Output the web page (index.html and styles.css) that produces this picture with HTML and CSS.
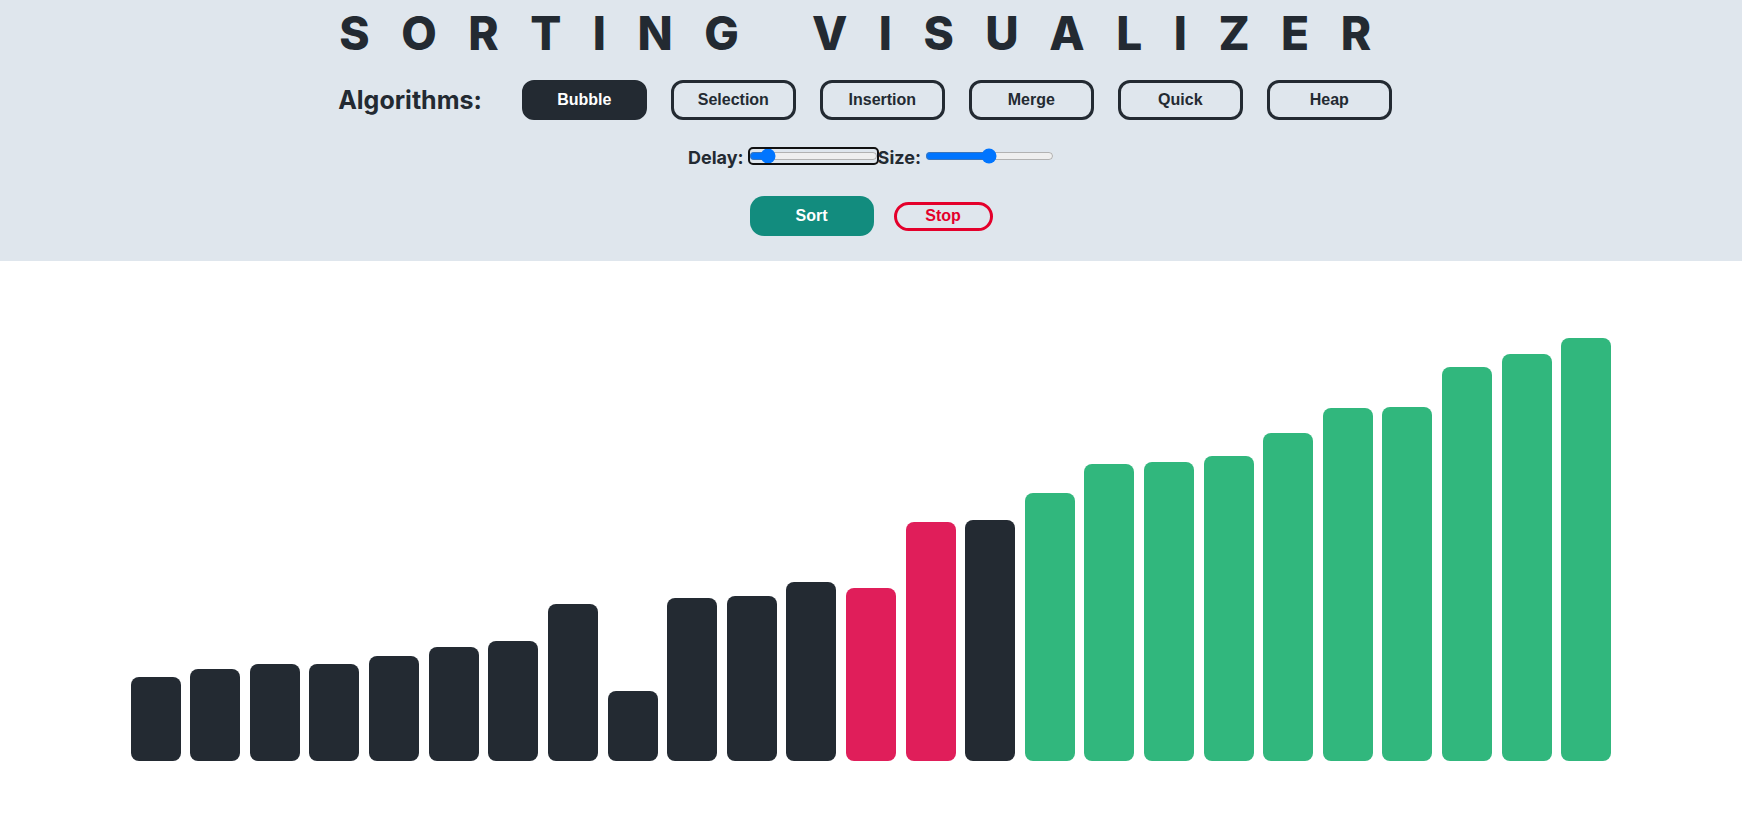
FILE: index.html
```html
<!DOCTYPE html>
<html lang="en">
<head>
<meta charset="utf-8">
<title>Sorting Visualizer</title>
<link rel="stylesheet" href="styles.css">
</head>
<body>
<header class="topbar">
  <h1 class="title">SORTING VISUALIZER</h1>
  <div class="algos">
    <span class="algos-label">Algorithms:</span>
    <button class="algo active">Bubble</button>
    <button class="algo">Selection</button>
    <button class="algo">Insertion</button>
    <button class="algo">Merge</button>
    <button class="algo">Quick</button>
    <button class="algo">Heap</button>
  </div>
  <div class="controls">
    <label class="ctl-label" for="delay">Delay:</label>
    <input class="range range-delay" id="delay" type="range" min="0" max="100" value="10">
    <label class="ctl-label ctl-size" for="size">Size:</label>
    <input class="range range-size" id="size" type="range" min="0" max="100" value="50">
  </div>
  <div class="actions">
    <button class="sort-btn">Sort</button>
    <button class="stop-btn">Stop</button>
  </div>
</header>
<main class="stage">
  <div class="bars">
    <div class="bar" style="height:84px"></div>
    <div class="bar" style="height:92px"></div>
    <div class="bar" style="height:97px"></div>
    <div class="bar" style="height:97px"></div>
    <div class="bar" style="height:105px"></div>
    <div class="bar" style="height:114px"></div>
    <div class="bar" style="height:120px"></div>
    <div class="bar" style="height:157px"></div>
    <div class="bar" style="height:70px"></div>
    <div class="bar" style="height:163px"></div>
    <div class="bar" style="height:165px"></div>
    <div class="bar" style="height:179px"></div>
    <div class="bar bar-compare" style="height:173px"></div>
    <div class="bar bar-compare" style="height:239px"></div>
    <div class="bar" style="height:241px"></div>
    <div class="bar bar-sorted" style="height:268px"></div>
    <div class="bar bar-sorted" style="height:297px"></div>
    <div class="bar bar-sorted" style="height:299px"></div>
    <div class="bar bar-sorted" style="height:305px"></div>
    <div class="bar bar-sorted" style="height:328px"></div>
    <div class="bar bar-sorted" style="height:353px"></div>
    <div class="bar bar-sorted" style="height:354px"></div>
    <div class="bar bar-sorted" style="height:394px"></div>
    <div class="bar bar-sorted" style="height:407px"></div>
    <div class="bar bar-sorted" style="height:423px"></div>
  </div>
</main>
</body>
</html>
```

FILE: styles.css
```css
* { box-sizing: border-box; }

html, body {
  margin: 0;
  padding: 0;
  background: #ffffff;
  color: #232a32;
  font-family: "Liberation Sans", Arial, sans-serif;
}

.topbar {
  background: #dfe6ed;
  height: 261px;
  padding-top: 5px;
  display: flex;
  flex-direction: column;
  align-items: center;
}

.title {
  margin: 0;
  font-family: Inter, "Noto Sans", sans-serif;
  font-weight: 800;
  font-size: 46px;
  line-height: 56px;
  letter-spacing: 31.5px;
  color: #232a32;
}

.algos {
  margin-top: 19px;
  height: 40px;
  display: flex;
  align-items: center;
}

.algos-label {
  font-family: Inter, "Noto Sans", sans-serif;
  font-weight: 700;
  font-size: 25px;
  margin-right: 28px;
}

.algo {
  width: 125px;
  height: 40px;
  margin: 0 12px;
  border: 3px solid #232a32;
  border-radius: 12px;
  background: transparent;
  color: #232a32;
  font-family: "Liberation Sans", Arial, sans-serif;
  font-weight: 700;
  font-size: 16px;
  padding: 0;
}

.algo.active {
  background: #232a32;
  color: #ffffff;
}

.controls {
  margin-top: 25px;
  height: 22px;
  display: flex;
  align-items: center;
}

.ctl-label {
  font-family: Inter, "Noto Sans", sans-serif;
  font-weight: 700;
  font-size: 18px;
  padding-top: 3px;
}

.range {
  width: 129px;
  height: 16px;
  margin: 0;
  accent-color: #0075ff;
}

.range-delay {
  margin-left: 5px;
  outline: 2px solid #111111;
  outline-offset: -1px;
  border-radius: 4px;
}

.range-size {
  margin-left: 4px;
}

.actions {
  margin-top: 29px;
  display: flex;
  align-items: center;
  gap: 20px;
}

.sort-btn {
  width: 124px;
  height: 40px;
  border: none;
  border-radius: 14px;
  background: #128c7e;
  color: #ffffff;
  font-family: "Liberation Sans", Arial, sans-serif;
  font-weight: 700;
  font-size: 16px;
}

.stop-btn {
  width: 99px;
  height: 29px;
  border: 3px solid #e4002b;
  border-radius: 15px;
  background: transparent;
  color: #e4002b;
  font-family: "Liberation Sans", Arial, sans-serif;
  font-weight: 700;
  font-size: 16px;
  padding: 0;
}

.stage {
  height: 566px;
}

.bars {
  width: 85%;
  height: 500px;
  margin: 0 auto;
  display: flex;
  align-items: flex-end;
  justify-content: space-between;
}

.bar {
  width: 50px;
  background: #232a32;
  border-radius: 8px;
}

.bar-compare {
  background: #e01e5a;
}

.bar-sorted {
  background: #31b77d;
}
```
